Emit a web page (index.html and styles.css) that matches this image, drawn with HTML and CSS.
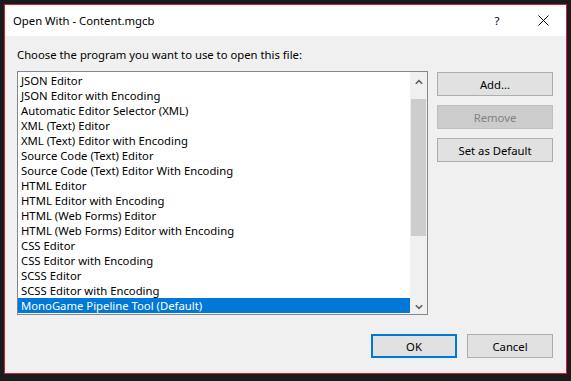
FILE: index.html
```html
<!DOCTYPE html>
<html>
<head>
<meta charset="utf-8">
<link rel="stylesheet" href="styles.css">
</head>
<body>
<div class="window">
  <div class="titlebar">
    <div class="title">Open With - Content.mgcb</div>
    <div class="tb-btn help">?</div>
    <div class="tb-btn close">
      <svg width="11" height="11" viewBox="0 0 11 11"><path d="M0.5 0.5 L10.5 10.5 M10.5 0.5 L0.5 10.5" stroke="#000" stroke-width="1" fill="none"/></svg>
    </div>
  </div>
  <div class="content">
    <div class="label">Choose the program you want to use to open this file:</div>
    <div class="main">
      <div class="listbox">
        <ul class="items">
          <li>JSON Editor</li>
          <li>JSON Editor with Encoding</li>
          <li>Automatic Editor Selector (XML)</li>
          <li>XML (Text) Editor</li>
          <li>XML (Text) Editor with Encoding</li>
          <li>Source Code (Text) Editor</li>
          <li>Source Code (Text) Editor With Encoding</li>
          <li>HTML Editor</li>
          <li>HTML Editor with Encoding</li>
          <li>HTML (Web Forms) Editor</li>
          <li>HTML (Web Forms) Editor with Encoding</li>
          <li>CSS Editor</li>
          <li>CSS Editor with Encoding</li>
          <li>SCSS Editor</li>
          <li>SCSS Editor with Encoding</li>
          <li class="selected">MonoGame Pipeline Tool (Default)</li>
        </ul>
        <div class="scrollbar">
          <div class="arrow">
            <svg width="8" height="6" viewBox="0 0 8 6"><path d="M0.8 4.8 L4 1.6 L7.2 4.8" stroke="#606060" stroke-width="1.6" fill="none"/></svg>
          </div>
          <div class="track"><div class="thumb"></div></div>
          <div class="arrow">
            <svg width="8" height="6" viewBox="0 0 8 6"><path d="M0.8 1.2 L4 4.4 L7.2 1.2" stroke="#606060" stroke-width="1.6" fill="none"/></svg>
          </div>
        </div>
      </div>
      <div class="side">
        <div class="btn">Add...</div>
        <div class="btn disabled">Remove</div>
        <div class="btn">Set as Default</div>
      </div>
    </div>
    <div class="footer">
      <div class="btn small default">OK</div>
      <div class="btn small">Cancel</div>
    </div>
  </div>
</div>
</body>
</html>
```
FILE: styles.css
```css
html, body {
  margin: 0;
  padding: 0;
  background: #1b1b1b;
}
body {
  padding: 4px 0 0 4px;
  width: 571px;
  height: 381px;
  box-sizing: border-box;
  overflow: hidden;
  font-family: "Noto Sans", "Open Sans", sans-serif;
  font-size: 11.3px;
  color: #000;
}
.window {
  width: 563px;
  height: 370px;
  box-sizing: border-box;
  border: 1px solid #dc1e32;
  background: #f0f0f0;
  display: flex;
  flex-direction: column;
}
.titlebar {
  height: 31px;
  background: #fff;
  display: flex;
  align-items: center;
  flex-shrink: 0;
}
.title {
  flex: 1;
  padding-left: 8px;
  line-height: 15px;
  margin-top: -1px;
}
.tb-btn {
  width: 46px;
  height: 31px;
  display: flex;
  align-items: center;
  justify-content: center;
}
.help {
  font-size: 11.5px;
  margin-top: -1px;
}
.close svg {
  display: block;
  margin-top: -1px;
}
.content {
  flex: 1;
  padding: 11px 13px 0 12px;
  display: flex;
  flex-direction: column;
}
.label {
  line-height: 15px;
  height: 15px;
}
.main {
  display: flex;
  margin-top: 9px;
  gap: 9px;
}
.listbox {
  width: 411px;
  height: 244px;
  box-sizing: border-box;
  border: 1px solid #828790;
  background: #fff;
  display: flex;
}
.items {
  list-style: none;
  margin: 0;
  padding: 1px 0 0 0;
  flex: 1;
}
.items li {
  height: 15px;
  line-height: 15px;
  padding-left: 3px;
  white-space: nowrap;
}
.items li.selected {
  background: #0078d7;
  color: #fff;
}
.scrollbar {
  width: 17px;
  background: #f0f0f0;
  display: flex;
  flex-direction: column;
}
.arrow {
  height: 17px;
  display: flex;
  align-items: center;
  justify-content: center;
  flex-shrink: 0;
}
.arrow svg {
  display: block;
  margin-top: 2px;
}
.track {
  flex: 1;
  padding: 10px 1px 0 1px;
}
.thumb {
  height: 137px;
  background: #cdcdcd;
}
.side {
  display: flex;
  flex-direction: column;
  gap: 9px;
  padding-top: 1px;
}
.btn {
  width: 116px;
  height: 24px;
  box-sizing: border-box;
  border: 1px solid #adadad;
  background: #e1e1e1;
  display: flex;
  align-items: center;
  justify-content: center;
  line-height: 15px;
}
.btn.disabled {
  background: #cccccc;
  border-color: #bfbfbf;
  color: #838383;
}
.footer {
  display: flex;
  justify-content: flex-end;
  gap: 10px;
  margin-top: 19px;
}
.btn.small {
  width: 86px;
}
.btn.default {
  border: 2px solid #0078d7;
}
```
